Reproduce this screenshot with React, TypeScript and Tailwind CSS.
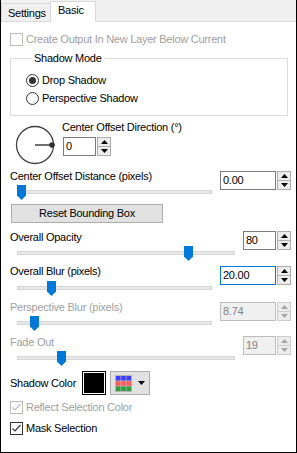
import React from 'react'

type SpinProps = {
  value: string
  boxClass: string
  disabled?: boolean
  focused?: boolean
}

function Arrow({ up, disabled }: { up?: boolean; disabled?: boolean }) {
  return (
    <svg width="7" height="4" viewBox="0 0 7 4">
      <path d={up ? 'M0 4 L3.5 0 L7 4Z' : 'M0 0 L3.5 4 L7 0Z'} fill={disabled ? '#a6a6a6' : '#000'} />
    </svg>
  )
}

function Spin({ value, boxClass, disabled, focused }: SpinProps) {
  const border = focused ? 'border-[#0078d7]' : disabled ? 'border-[#bcbcbc]' : 'border-[#7a7a7a]'
  return (
    <div className="flex gap-[1px] h-[19px]">
      <div
        className={`${boxClass} border ${border} ${disabled ? 'bg-[#f0f0f0] text-[#838383]' : 'bg-white text-black'} pl-[2px] flex items-center`}
      >
        {value}
      </div>
      <div className={`w-[14px] flex flex-col border ${disabled ? 'border-[#cccccc]' : 'border-[#adadad]'} bg-[#ececec]`}>
        <div className="flex-1 flex items-center justify-center">
          <Arrow up disabled={disabled} />
        </div>
        <div className={`flex-1 flex items-center justify-center border-t ${disabled ? 'border-[#cccccc]' : 'border-[#adadad]'}`}>
          <Arrow disabled={disabled} />
        </div>
      </div>
    </div>
  )
}

function Slider({ pos }: { pos: number }) {
  return (
    <div className="relative h-[16px] pt-[6px]">
      <div className="ml-[7px] mr-[8px] h-[4px] bg-[#e7e7e7] border border-[#d6d6d6]" />
      <svg className="absolute top-[1px]" style={{ left: pos }} width="9" height="15" viewBox="0 0 9 15">
        <path d="M0 0 H9 V10.5 L4.5 15 L0 10.5Z" fill="#0078d7" />
      </svg>
    </div>
  )
}

function Check({ checked, disabled }: { checked?: boolean; disabled?: boolean }) {
  return (
    <div
      className={`w-[13px] h-[13px] shrink-0 border ${disabled ? 'border-[#bcbcbc]' : 'border-[#333333]'} bg-white flex items-center justify-center`}
    >
      {checked && (
        <svg width="11" height="11" viewBox="0 0 11 11">
          <path d="M1.5 5.5 L4 8 L9.5 2" fill="none" stroke={disabled ? '#bcbcbc' : '#333333'} strokeWidth="1.2" />
        </svg>
      )}
    </div>
  )
}

function Radio({ checked }: { checked?: boolean }) {
  return (
    <div className="w-[13px] h-[13px] rounded-full border border-[#333333] bg-white flex items-center justify-center">
      {checked && <div className="w-[7px] h-[7px] rounded-full bg-[#333333]" />}
    </div>
  )
}

function SliderRow({
  label,
  pos,
  disabled,
  children,
  sliderGap,
  spinGap,
}: {
  label: string
  pos: number
  disabled?: boolean
  children: React.ReactNode
  sliderGap: string
  spinGap: string
}) {
  return (
    <div className="flex items-start">
      <div className="flex-1 flex flex-col">
        <div className={disabled ? 'text-[#a0a0a0]' : ''}>{label}</div>
        <div className={sliderGap}>
          <Slider pos={pos} />
        </div>
      </div>
      <div className={spinGap}>{children}</div>
    </div>
  )
}

export default function App() {
  return (
    <div className="w-[297px] h-[453px] bg-white border-x border-b border-black flex flex-col font-['Liberation_Sans',Arial,sans-serif] text-[11px] leading-[13px] tracking-[-0.25px] text-black overflow-hidden">
      {/* tabs */}
      <div className="h-[22px] shrink-0 bg-[#f0f0f0] border-b border-[#d9d9d9] flex items-end">
        <div className="h-[18px] w-[50px] border border-b-0 border-[#d9d9d9] pl-[6px] pt-[3px]">Settings</div>
        <div className="h-[21px] w-[46px] -ml-px -mb-px bg-white border border-b-0 border-[#d9d9d9] pl-[7px] pt-[2px]">Basic</div>
      </div>

      <div className="flex flex-col pl-[9px] pr-[5px]">
        <div className="mt-[11px] flex items-center gap-[3px] text-[#a0a0a0]">
          <Check disabled />
          <span>Create Output In New Layer Below Current</span>
        </div>

        <fieldset className="mt-[6px] w-[278px] border border-[#dcdcdc] pl-[15px] pb-[10px]">
          <legend className="ml-[6px] px-[2px]">Shadow Mode</legend>
          <div className="mt-[9px] flex items-center gap-[3px]">
            <Radio checked />
            <span>Drop Shadow</span>
          </div>
          <div className="mt-[5px] flex items-center gap-[3px]">
            <Radio />
            <span>Perspective Shadow</span>
          </div>
        </fieldset>

        {/* direction dial */}
        <div className="mt-[5px] flex items-start">
          <svg className="ml-[5px] mt-[4px]" width="40" height="40" viewBox="0 0 40 40">
            <circle cx="20" cy="20" r="18.5" fill="none" stroke="#404040" strokeWidth="1.3" />
            <line x1="20" y1="20" x2="37" y2="20" stroke="#404040" strokeWidth="1.5" />
            <circle cx="37" cy="20" r="2.8" fill="#303030" />
          </svg>
          <div className="ml-[7px] flex flex-col">
            <div>Center Offset Direction (°)</div>
            <div className="mt-[3px] ml-px">
              <Spin value="0" boxClass="w-[33px]" />
            </div>
          </div>
        </div>

        <div className="mt-[5px]">
          <SliderRow label="Center Offset Distance (pixels)" pos={7} sliderGap="mt-[1px]" spinGap="mt-[1px]">
            <Spin value="0.00" boxClass="w-[56px]" />
          </SliderRow>
        </div>

        <button className="mt-[4px] ml-px w-[152px] h-[19px] bg-[#e1e1e1] border border-[#adadad] text-center">
          Reset Bounding Box
        </button>

        <div className="mt-[8px]">
          <SliderRow label="Overall Opacity" pos={174} sliderGap="mt-[1px]" spinGap="mt-0">
            <Spin value="80" boxClass="w-[33px]" />
          </SliderRow>
        </div>

        <div className="mt-[4px]">
          <SliderRow label="Overall Blur (pixels)" pos={37} sliderGap="mt-[2px]" spinGap="mt-[1px]">
            <Spin value="20.00" boxClass="w-[56px]" focused />
          </SliderRow>
        </div>

        <div className="mt-[5px]">
          <SliderRow label="Perspective Blur (pixels)" pos={20} disabled sliderGap="mt-[1px]" spinGap="mt-[1px]">
            <Spin value="8.74" boxClass="w-[56px]" disabled />
          </SliderRow>
        </div>

        <div className="mt-[5px]">
          <SliderRow label="Fade Out" pos={47} disabled sliderGap="mt-[1px]" spinGap="mt-0">
            <Spin value="19" boxClass="w-[33px]" disabled />
          </SliderRow>
        </div>

        {/* shadow color */}
        <div className="mt-[5px] flex items-center h-[24px]">
          <div className="w-[72px]">Shadow Color</div>
          <div className="w-[24px] h-[24px] border border-black bg-white p-[1px]">
            <div className="w-full h-full bg-black" />
          </div>
          <div className="ml-[4px] w-[40px] h-[24px] bg-[#e1e1e1] border border-[#adadad] flex items-center pl-[4px] gap-[6px]">
            <svg width="17" height="17" viewBox="0 0 17 17">
              <rect x="0" y="0" width="17" height="17" fill="#b4b4b4" />
              <rect x="1" y="1" width="4.5" height="4.5" fill="#3c3cff" />
              <rect x="6.25" y="1" width="4.5" height="4.5" fill="#3c3cff" />
              <rect x="11.5" y="1" width="4.5" height="4.5" fill="#3c3cff" />
              <rect x="1" y="6.25" width="4.5" height="4.5" fill="#ff5c5c" />
              <rect x="6.25" y="6.25" width="4.5" height="4.5" fill="#ff5c5c" />
              <rect x="11.5" y="6.25" width="4.5" height="4.5" fill="#ff5c5c" />
              <rect x="1" y="11.5" width="4.5" height="4.5" fill="#2f9e3f" />
              <rect x="6.25" y="11.5" width="4.5" height="4.5" fill="#2f9e3f" />
              <rect x="11.5" y="11.5" width="4.5" height="4.5" fill="#2f9e3f" />
            </svg>
            <svg width="7" height="4" viewBox="0 0 7 4">
              <path d="M0 0 L3.5 4 L7 0Z" fill="#000" />
            </svg>
          </div>
        </div>

        <div className="mt-[6px] flex items-center gap-[3px] text-[#a0a0a0]">
          <Check checked disabled />
          <span>Reflect Selection Color</span>
        </div>

        <div className="mt-[8px] flex items-center gap-[3px]">
          <Check checked />
          <span>Mask Selection</span>
        </div>
      </div>
    </div>
  )
}
